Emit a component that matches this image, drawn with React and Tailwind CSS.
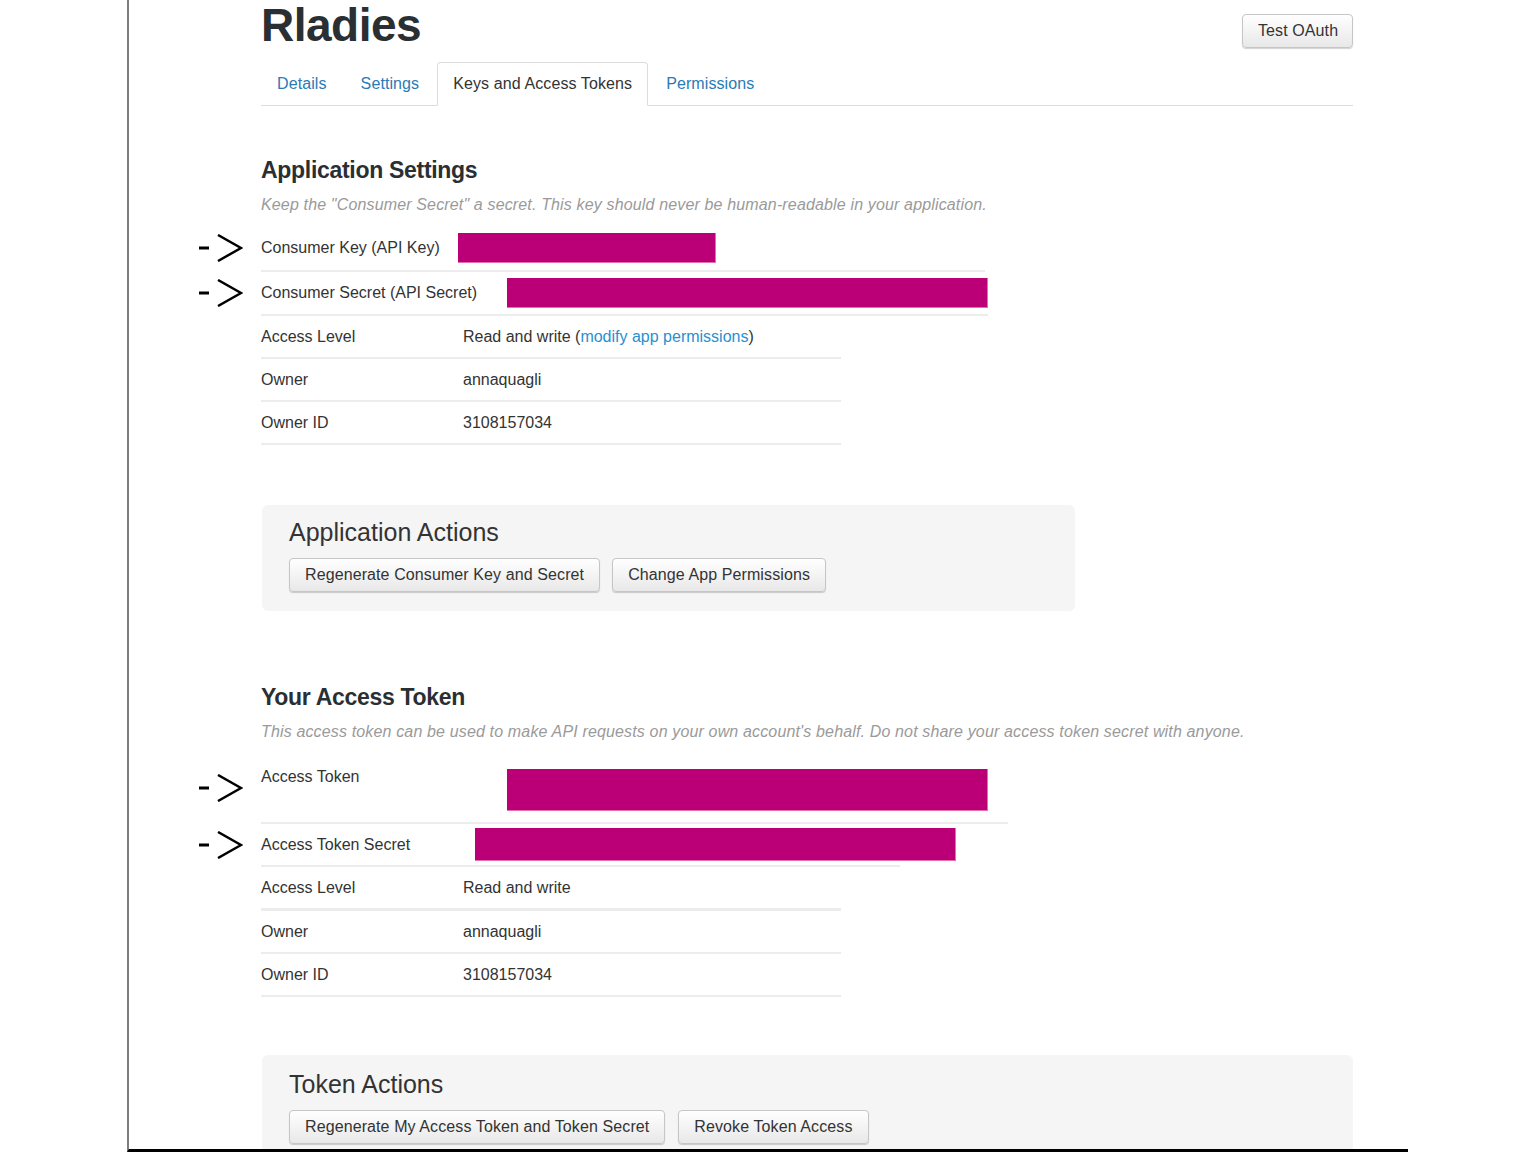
import React from "react";

const font = { fontFamily: '"Liberation Sans", Arial, sans-serif' };

const Arrow = ({ className }) => (
  <svg
    className={`absolute left-[-62px] ${className}`}
    width="44"
    height="28"
    viewBox="0 0 44 28"
  >
    <rect x="0" y="12.5" width="10" height="3" fill="#000" />
    <polyline
      points="19,1 42,14 19,27"
      fill="none"
      stroke="#000"
      strokeWidth="2.5"
    />
  </svg>
);

const Redacted = ({ className }) => (
  <div className={`bg-[#bb0077] border-b border-r border-[#e46fb0] ${className}`} />
);

const Btn = ({ children, className = "" }) => (
  <button
    className={`h-[34px] px-[15px] whitespace-nowrap rounded-[4px] border border-[#c6c6c6] bg-gradient-to-b from-white to-[#e8e8e8] text-[16px] tracking-[0.1px] text-[#333] shadow-[0_1px_1px_rgba(0,0,0,0.18)] ${className}`}
  >
    {children}
  </button>
);

// heights include the bottom border (border-box)
const Row = ({ label, labelW = "w-[202px]", width = "w-[580px]", h = "h-[43px]", border = "border-b-2", children, arrow }) => (
  <div className={`relative flex items-center ${h} ${width} ${border} border-[#ececec]`}>
    {arrow && <Arrow className="top-1/2 -translate-y-1/2" />}
    <div className={`${labelW} shrink-0 text-[16px] text-[#333]`}>{label}</div>
    <div className="text-[16px] text-[#333]">{children}</div>
  </div>
);

const tabs = ["Details", "Settings", "Keys and Access Tokens", "Permissions"];

export default function App() {
  return (
    <div className="w-[1536px] h-[1152px] bg-white" style={font}>
      <div className="ml-[127px] w-[1281px] h-[1152px] border-l-2 border-[#7d7d7d] border-b-[3px] border-b-black overflow-hidden">
        <div className="pl-[132px] w-[1224px]">
          {/* header */}
          <div className="flex justify-between items-start">
            <h1 className="pt-px text-[46px] leading-[48px] font-bold text-[#292f33] tracking-[-0.5px]">Rladies</h1>
            <Btn className="mt-[14px] w-[111px] px-0">Test OAuth</Btn>
          </div>

          {/* tabs */}
          <div className="mt-[13px] flex border-b border-[#dcdcdc]">
            {tabs.map((t) => {
              const active = t === "Keys and Access Tokens";
              return (
                <div
                  key={t}
                  className={
                    active
                      ? "mr-[2px] -mb-px px-[15px] py-[10px] leading-[22px] text-[16px] tracking-[0.1px] text-[#333] bg-white border border-[#dcdcdc] border-b-white rounded-t-[4px]"
                      : "mr-[2px] -mb-px px-[15px] py-[10px] leading-[22px] text-[16px] tracking-[0.1px] text-[#2a7ab6] border border-transparent"
                  }
                >
                  {t}
                </div>
              );
            })}
          </div>

          {/* application settings */}
          <h2 className="mt-[50px] text-[23px] leading-[28px] font-bold text-[#292f33] tracking-[-0.3px]">
            Application Settings
          </h2>
          <p className="mt-[11px] text-[16px] leading-[20px] italic tracking-[0.15px] text-[#9a9a9a]">
            Keep the "Consumer Secret" a secret. This key should never be human-readable in your application.
          </p>

          <div className="mt-[10px]">
            <Row label="Consumer Key (API Key)" labelW="w-[197px]" width="w-[724px]" h="h-[47px]" arrow>
              <Redacted className="w-[258px] h-[30px]" />
            </Row>
            <Row label="Consumer Secret (API Secret)" labelW="w-[246px]" width="w-[727px]" h="h-[44px]" arrow>
              <Redacted className="w-[481px] h-[30px]" />
            </Row>
            <Row label="Access Level">
              Read and write (<span className="text-[#2a8fcf]">modify app permissions</span>)
            </Row>
            <Row label="Owner">annaquagli</Row>
            <Row label="Owner ID">3108157034</Row>
          </div>

          {/* application actions */}
          <div className="mt-[60px] ml-px w-[813px] bg-[#f5f5f5] rounded-[6px] px-[27px] pt-[13px] pb-[19px]">
            <h3 className="text-[25px] leading-[28px] text-[#333]">Application Actions</h3>
            <div className="mt-[12px] flex gap-[12px]">
              <Btn>Regenerate Consumer Key and Secret</Btn>
              <Btn>Change App Permissions</Btn>
            </div>
          </div>

          {/* access token */}
          <h2 className="mt-[72px] text-[23px] leading-[28px] font-bold text-[#292f33] tracking-[-0.3px]">
            Your Access Token
          </h2>
          <p className="mt-[11px] text-[16px] leading-[20px] italic tracking-[0.15px] text-[#9a9a9a]">
            This access token can be used to make API requests on your own account's behalf. Do not share your access token secret with anyone.
          </p>

          <div className="mt-[20px]">
            <div className="relative flex items-start w-[747px] pt-[4px] pb-[11px] border-b-2 border-[#ececec]">
              <Arrow className="top-[12px]" />
              <div className="w-[246px] shrink-0 text-[16px] leading-[22px] text-[#333]">Access Token</div>
              <Redacted className="mt-[3px] w-[481px] h-[42px]" />
            </div>
            <Row label="Access Token Secret" labelW="w-[214px]" width="w-[639px]" arrow>
              <Redacted className="w-[481px] h-[33px]" />
            </Row>
            <Row label="Access Level" border="border-b-[3px]" h="h-[44px]">Read and write</Row>
            <Row label="Owner">annaquagli</Row>
            <Row label="Owner ID">3108157034</Row>
          </div>

          {/* token actions */}
          <div className="mt-[58px] ml-px w-[1091px] h-[140px] bg-[#f5f5f5] rounded-[6px] px-[27px] pt-[15px]">
            <h3 className="text-[25px] leading-[28px] text-[#333]">Token Actions</h3>
            <div className="mt-[12px] flex gap-[13px]">
              <Btn>Regenerate My Access Token and Token Secret</Btn>
              <Btn>Revoke Token Access</Btn>
            </div>
          </div>
        </div>
      </div>
    </div>
  );
}
